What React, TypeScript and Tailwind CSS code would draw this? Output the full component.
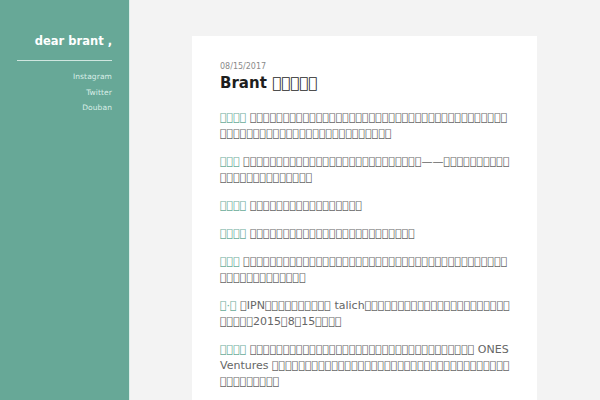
import React from "react";

const cjk = (n: number, seed: number) => {
  let s = "";
  for (let i = 0; i < n; i++) s += String.fromCodePoint(0x30000 + ((seed * 37 + i * 13) % 800));
  return s;
};

const Link = ({ children }: { children: React.ReactNode }) => (
  <a className="text-[#6aab99]">{children}</a>
);

export default function App() {
  return (
    <div className="flex h-[400px] w-[600px] overflow-hidden" style={{ fontFamily: '"DejaVu Sans", sans-serif' }}>
      <aside className="w-[130px] shrink-0 bg-[#67a897] border-r border-[#dcefe9] pr-[17px] pl-[17px]">
        <h1 className="mt-[33px] text-right text-[11.5px] leading-[16px] font-bold text-white">dear brant ,</h1>
        <div className="mt-[11px] h-px bg-[#cfe6df]" />
        <nav className="mt-[11px] flex flex-col items-end gap-[5.5px] text-[7.5px] leading-[10px] tracking-[0.1px] text-[#d9eee7]">
          <a>Instagram</a>
          <a>Twitter</a>
          <a>Douban</a>
        </nav>
      </aside>
      <main className="flex-1 bg-[#f3f3f3] pl-[62px] pt-[36px]">
        <article className="w-[345px] bg-white pl-[28px] pr-[26px] pt-[26px] pb-8">
          <div className="text-[8px] leading-[10px] text-[#8a8a8a]">08/15/2017</div>
          <h2 className="mt-[1px] text-[15px] leading-[20px] font-bold text-[#1e1e1e]">Brant {cjk(5, 1)}</h2>
          <div className="mt-[17px] flex flex-col gap-[12px] text-[11px] leading-[16px] text-[#666]">
            <p><Link>{cjk(4, 2)}</Link> {cjk(65, 3)}</p>
            <p><Link>{cjk(3, 4)}</Link> {cjk(27, 5)}——{cjk(24, 6)}</p>
            <p><Link>{cjk(4, 7)}</Link> {cjk(17, 8)}</p>
            <p><Link>{cjk(4, 9)}</Link> {cjk(25, 10)}</p>
            <p><Link>{cjk(3, 11)}</Link> {cjk(53, 12)}</p>
            <p><Link>{cjk(1, 13)}·{cjk(1, 14)}</Link> {cjk(1, 15)}IPN{cjk(10, 16)} talich{cjk(27, 17)}2015{cjk(1, 18)}8{cjk(1, 19)}15{cjk(4, 20)}</p>
            <p><Link>{cjk(4, 21)}</Link> {cjk(34, 22)} ONES Ventures {cjk(45, 23)}</p>
          </div>
        </article>
      </main>
    </div>
  );
}
